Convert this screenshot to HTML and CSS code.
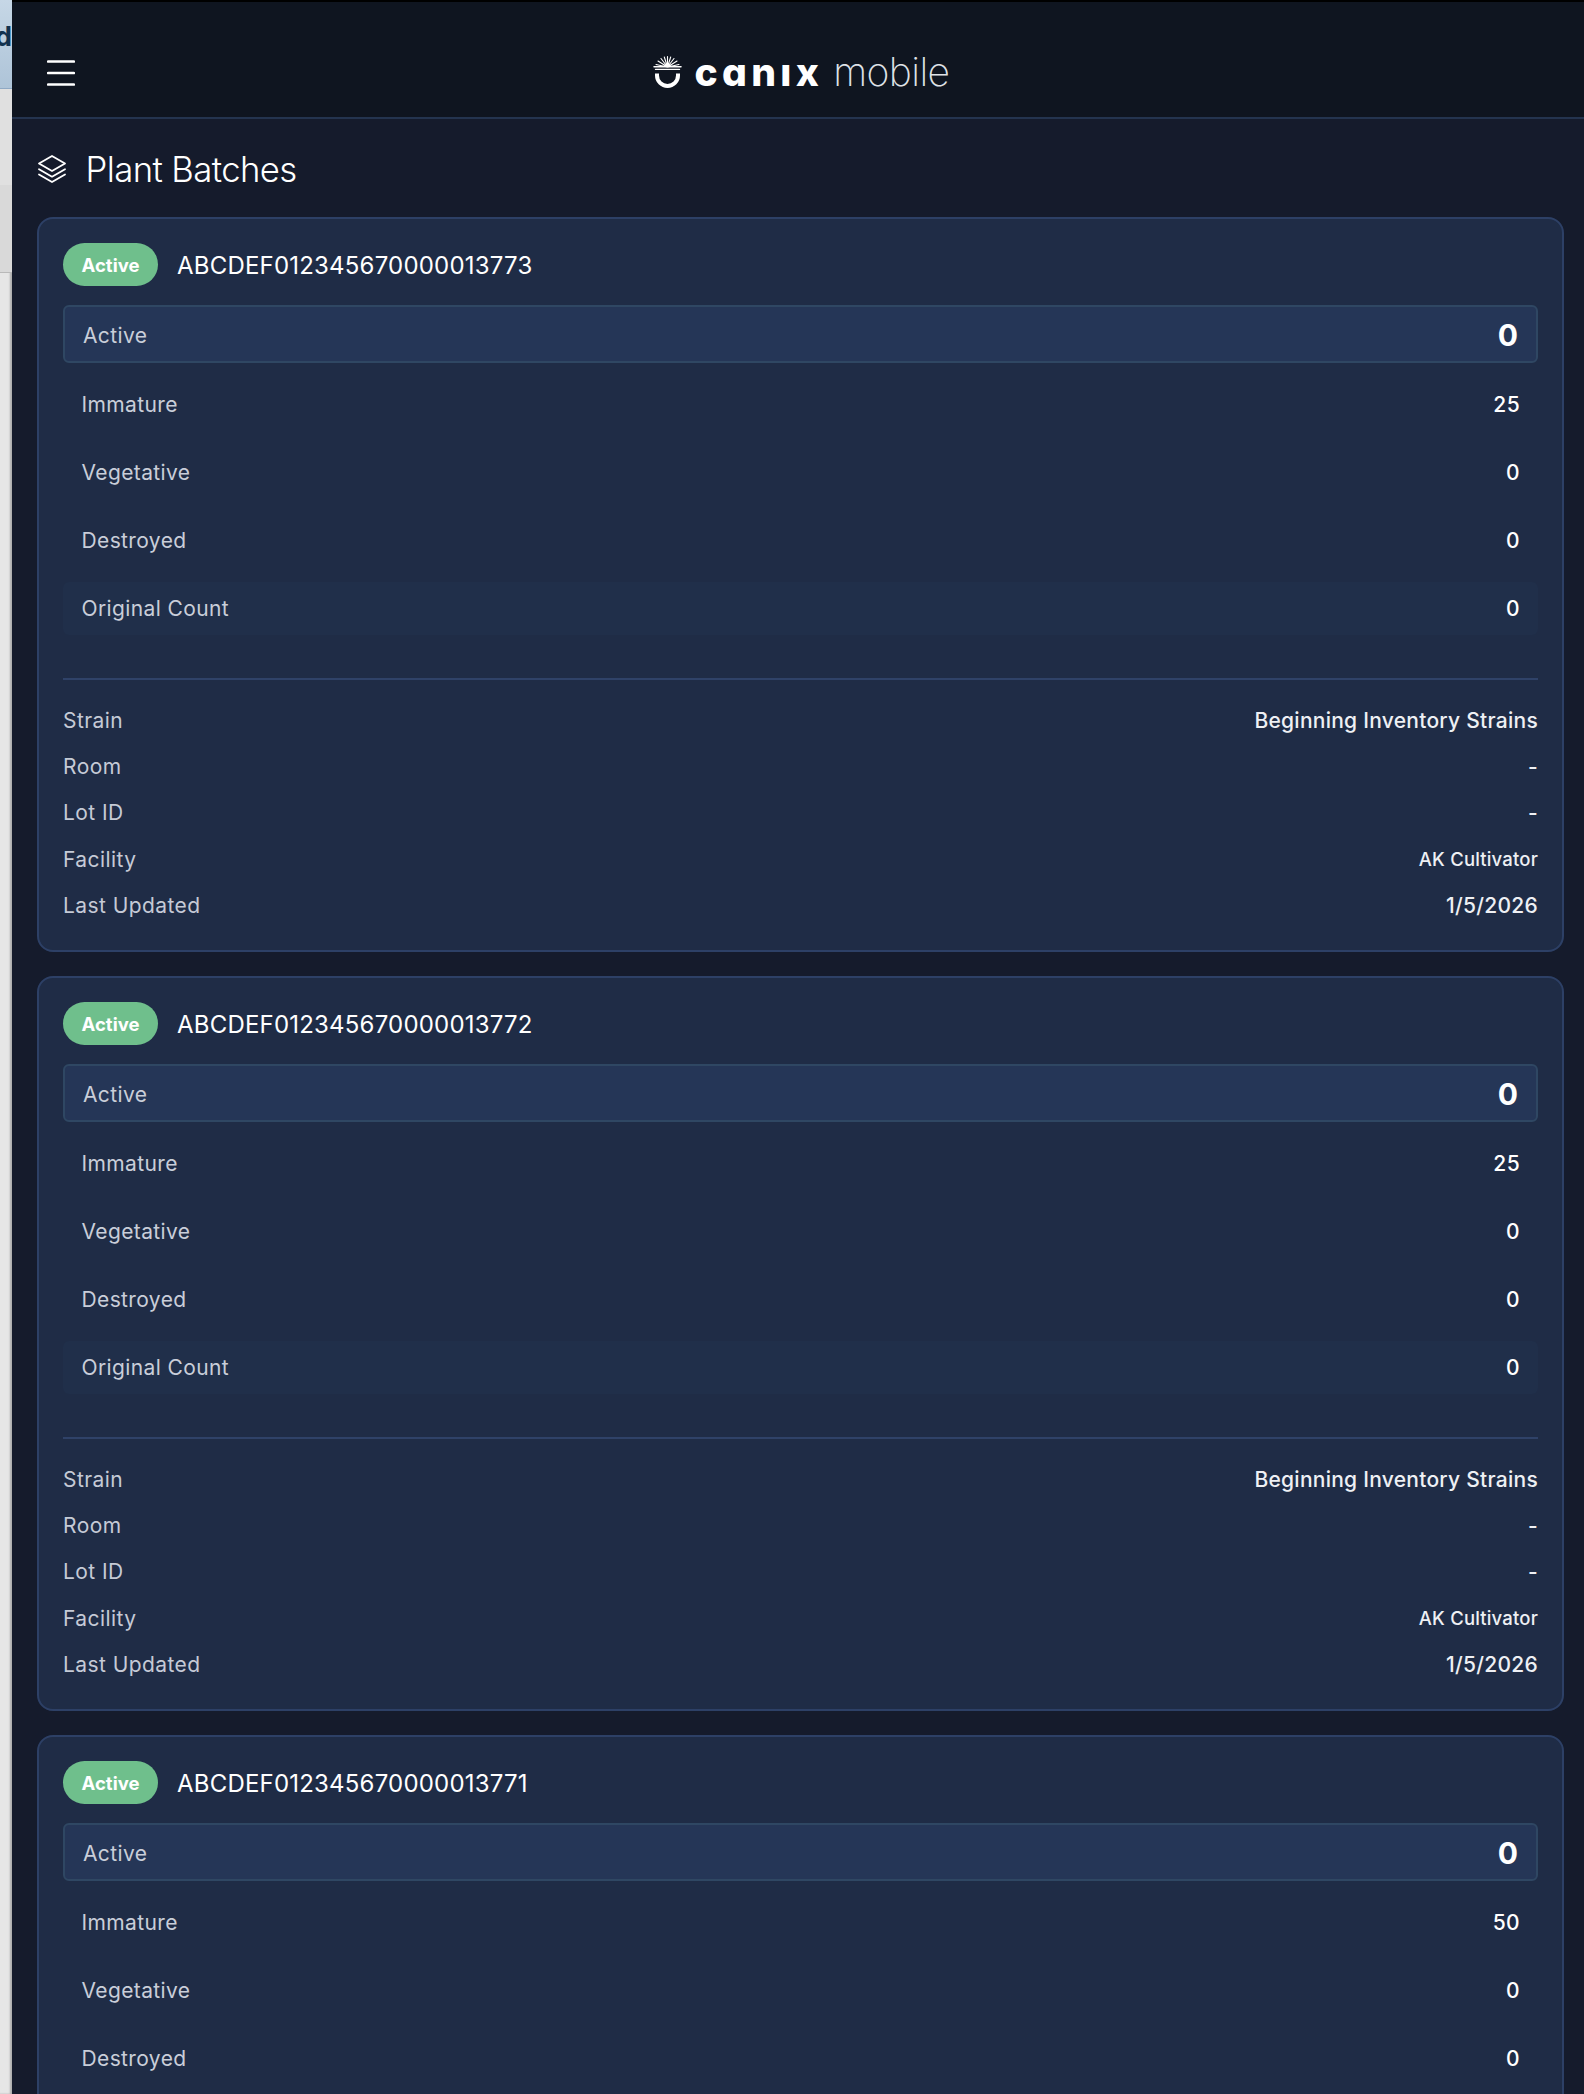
FILE: index.html
```html
<!DOCTYPE html>
<html lang="en">
<head>
<meta charset="utf-8">
<title>Plant Batches</title>
<link rel="stylesheet" href="styles.css">
</head>
<body>
<div class="viewport">
  <aside class="behind"><div class="behind-top"><span class="behind-letter">d</span></div><div class="behind-band"></div><div class="behind-band-2"></div></aside>
  <div class="app">
    <header class="topbar">
      <button class="menu" aria-label="Menu"><svg width="28" height="26" viewBox="0 0 28 26"><path d="M1.200 1.500h25.600M1.200 13h25.600M1.200 24.500h25.600" fill="none" stroke="#fff" stroke-width="2.700" stroke-linecap="round"/></svg></button>
      <div class="logo">
        <svg class="logo-mark" width="29" height="32" viewBox="0 0 29 32"><g fill="none" stroke="#fff" stroke-linecap="round"><path d="M14.500 11V.6M14.500 11 11.300 1M14.500 11 17.700 1M14.500 11 8 2.500M14.500 11 21 2.500M14.500 11 5 5M14.500 11 24 5M14.500 11 3 8.500M14.500 11 26 8.500" stroke-width="1.100"/><path d="M1 10.800h27" stroke-width="1.500"/><path d="M2.500 13.400h24" stroke-width="1.300"/></g><path d="M4 17.600V19.500A10.500 10.500 0 0 0 25 19.500V17.600" fill="none" stroke="#fff" stroke-width="4"/></svg>
        <span class="logo-canix">canıx</span><span class="logo-mobile">mobile</span>
      </div>
    </header>
    <main class="content">
      <h1 class="title"><svg width="30" height="30" viewBox="0 0 30 30"><g fill="none" stroke="#fff" stroke-width="1.800" stroke-linejoin="round" stroke-linecap="round"><path d="M15 2 28 9.500 15 17 2 9.500Z"/><path d="M2 15.200 15 22.700 28 15.200"/><path d="M2 20.500 15 28 28 20.500"/></g></svg>Plant Batches</h1>

      <section class="card">
        <div class="card-head"><span class="badge">Active</span><span class="tag">ABCDEF012345670000013773</span></div>
        <div class="phase phase-active"><span>Active</span><b>0</b></div>
        <div class="phase"><span>Immature</span><b>25</b></div>
        <div class="phase"><span>Vegetative</span><b>0</b></div>
        <div class="phase"><span>Destroyed</span><b>0</b></div>
        <div class="phase phase-total"><span>Original Count</span><b>0</b></div>
        <dl class="meta">
          <div class="meta-row"><dt>Strain</dt><dd>Beginning Inventory Strains</dd></div>
          <div class="meta-row"><dt>Room</dt><dd>-</dd></div>
          <div class="meta-row"><dt>Lot ID</dt><dd>-</dd></div>
          <div class="meta-row"><dt>Facility</dt><dd class="small">AK Cultivator</dd></div>
          <div class="meta-row"><dt>Last Updated</dt><dd>1/5/2026</dd></div>
        </dl>
      </section>

      <section class="card">
        <div class="card-head"><span class="badge">Active</span><span class="tag">ABCDEF012345670000013772</span></div>
        <div class="phase phase-active"><span>Active</span><b>0</b></div>
        <div class="phase"><span>Immature</span><b>25</b></div>
        <div class="phase"><span>Vegetative</span><b>0</b></div>
        <div class="phase"><span>Destroyed</span><b>0</b></div>
        <div class="phase phase-total"><span>Original Count</span><b>0</b></div>
        <dl class="meta">
          <div class="meta-row"><dt>Strain</dt><dd>Beginning Inventory Strains</dd></div>
          <div class="meta-row"><dt>Room</dt><dd>-</dd></div>
          <div class="meta-row"><dt>Lot ID</dt><dd>-</dd></div>
          <div class="meta-row"><dt>Facility</dt><dd class="small">AK Cultivator</dd></div>
          <div class="meta-row"><dt>Last Updated</dt><dd>1/5/2026</dd></div>
        </dl>
      </section>

      <section class="card">
        <div class="card-head"><span class="badge">Active</span><span class="tag">ABCDEF012345670000013771</span></div>
        <div class="phase phase-active"><span>Active</span><b>0</b></div>
        <div class="phase"><span>Immature</span><b>50</b></div>
        <div class="phase"><span>Vegetative</span><b>0</b></div>
        <div class="phase"><span>Destroyed</span><b>0</b></div>
      </section>
    </main>
  </div>
</div>
</body>
</html>
```
FILE: styles.css
```css
* { box-sizing: border-box; }
html, body { margin: 0; height: 100%; overflow: hidden; background: #151b2c; }
body { font-family: Inter, "Liberation Sans", sans-serif; color: #fff; }
.viewport { display: flex; height: 2094px; overflow: hidden; }
.behind { width: 12px; flex: none; background: #e6e6e6; overflow: hidden; box-shadow: inset -2px 0 2px rgba(0,0,0,.25); }
.behind-top { height: 89px; background: linear-gradient(180deg, #c6d7e6, #aec4d8); border-bottom: 1px solid #8fa9c4; overflow: hidden; position: relative; }
.behind-letter { position: absolute; right: 0; top: 21px; font-size: 27px; font-weight: 700; color: #12324f; line-height: 32px; }
.behind-band { height: 96px; background: #e0e0e0; }
.behind-band-2 { height: 88px; background: #d9d9d9; border-bottom: 1px solid #b9b9b9; }
.app { flex: 1; min-width: 0; background: #151b2c; }
.topbar { height: 119px; background: #0f1520; border-top: 2px solid #000; border-bottom: 2px solid #24344f; padding-top: 24px; display: grid; grid-template-columns: 1fr auto 1fr; align-items: center; }
.menu { justify-self: start; margin-left: 35px; margin-top: 3px; padding: 0; border: 0; background: none; line-height: 0; }
.logo { display: flex; align-items: center; margin-left: 6px; }
.logo-mark { margin-right: 13px; margin-top: 0; }
.logo-canix { font-size: 39px; font-weight: 800; font-feature-settings: "cv11" 1; letter-spacing: 4.300px; line-height: 44px; margin-right: 10px; }
.logo-mobile { font-size: 39px; font-weight: 200; letter-spacing: -.6px; color: #dfe2e7; line-height: 44px; }
.content { padding: 0 20px 0 25px; }
.title { margin: 0; height: 98px; padding-top: 1px; display: flex; align-items: center; gap: 18.500px; font-size: 34.700px; font-weight: 300; letter-spacing: -0.600px; line-height: 44px; }
.card { background: #1f2c46; border: 2px solid #2d4066; border-radius: 16px; padding: 24px 24px 0; height: 735px; margin-bottom: 24px; }
.card-head { display: flex; align-items: center; gap: 19px; height: 43px; margin-bottom: 19px; }
.badge { width: 95px; height: 43px; border-radius: 22px; background: #6fbf8c; color: #fff; font-size: 18.500px; font-weight: 700; display: flex; align-items: center; justify-content: center; }
.tag { font-size: 24px; font-weight: 400; letter-spacing: .2px; color: #fff; padding-top: 1px; }
.phase { display: flex; align-items: center; justify-content: space-between; height: 53px; margin-bottom: 15px; padding: 0 18px 0 18.500px; font-size: 21px; letter-spacing: .38px; color: #c9ced9; border-radius: 6px; }
.phase b { font-weight: 500; color: #fff; }
.phase-active { height: 58px; padding: 2px 18px 0 18px; margin-bottom: 15px; background: #253657; border: 2px solid #2f4763; }
.phase-active b { font-size: 30px; font-weight: 700; letter-spacing: 0; }
.phase-total { background: #202f4a; margin-bottom: 0; }
.meta { margin: 43px 0 0; padding-top: 17px; border-top: 2px solid #2f4268; }
.meta-row { display: flex; justify-content: space-between; align-items: center; height: 46.300px; font-size: 21px; letter-spacing: .42px; }
.meta dt { color: #c5cad6; }
.meta dd { margin: 0; color: #eef0f4; font-weight: 500; letter-spacing: .26px; }
.meta dd.small { font-size: 18.500px; letter-spacing: .18px; }
```
